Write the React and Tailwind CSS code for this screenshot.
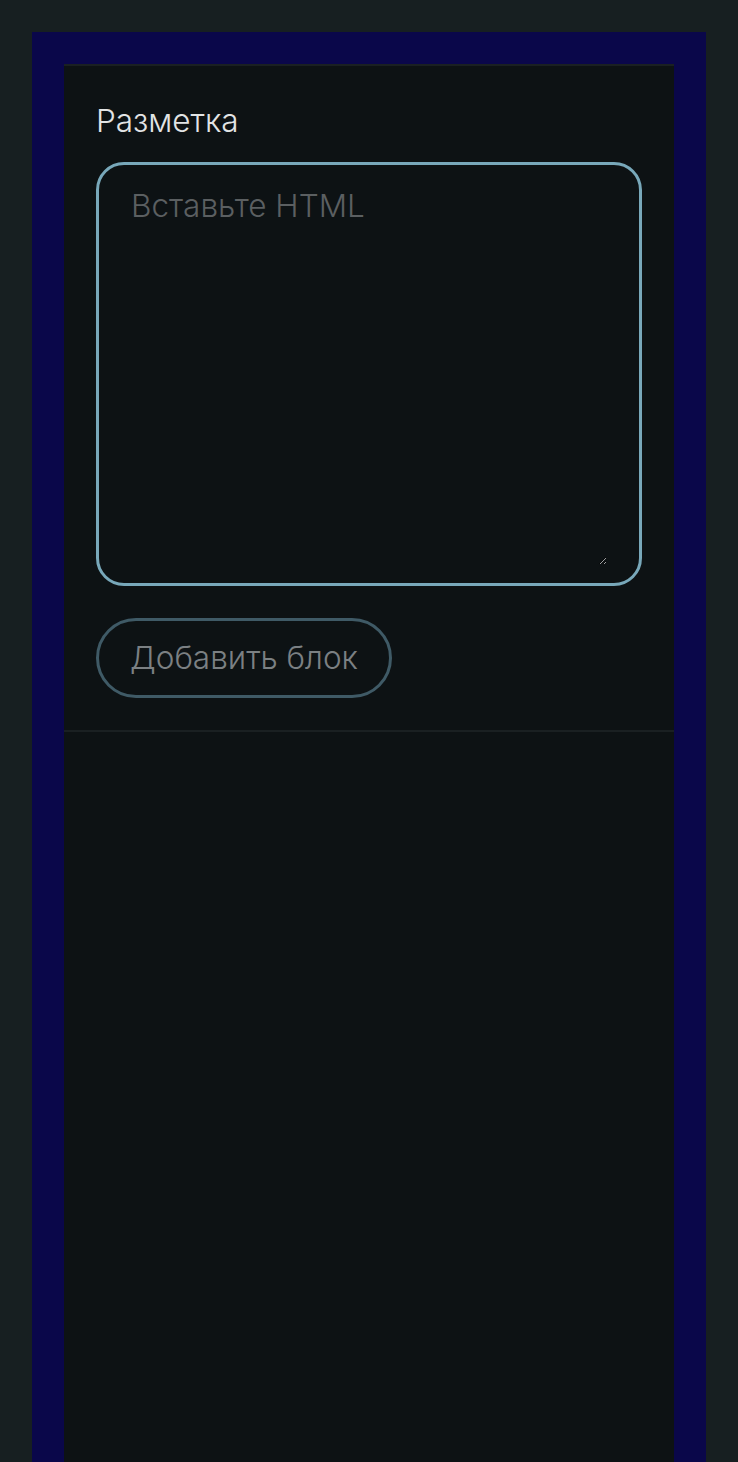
import React from 'react';

const App = () => {
  return (
    <div className="min-h-screen flex flex-col bg-[#171f21] pt-8 px-8" style={{ fontFamily: 'Inter, "Noto Sans", sans-serif' }}>
      <div className="flex-1 flex flex-col bg-[#0a074a] pt-8 px-8">
        <div className="flex-1 bg-[#0d1214] border-t-2 border-[#1a2022]">
          <div className="p-8 border-b-2 border-[#1a2022]">
            <label className="block text-[31.5px] font-light leading-[45px] text-[#e2e4e5] mb-[19px]">Разметка</label>
            <div className="border-[3px] border-[#78a8ba] rounded-[28px] px-8 py-[18px]">
              <textarea
                placeholder="Вставьте HTML"
                className="block w-full h-[382px] bg-transparent p-0 text-[31.5px] font-light leading-[45px] text-[#e2e4e5] placeholder:text-[#5b5f61] outline-none"
              />
            </div>
            <button className="mt-[32px] h-[80px] px-[31px] rounded-full border-[3px] border-[#3f5a66] text-[31.5px] font-light text-[#7b8083] bg-transparent">
              Добавить блок
            </button>
          </div>
        </div>
      </div>
    </div>
  );
};

export default App;
